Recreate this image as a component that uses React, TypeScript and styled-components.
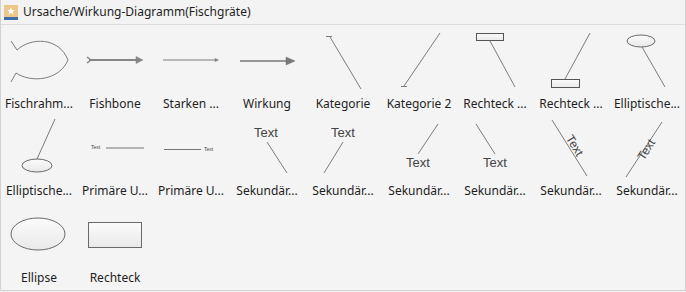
import React, { FC, ReactNode } from "react";
import styled, { createGlobalStyle } from "styled-components";

const GlobalStyle = createGlobalStyle`
    html, body {
        margin: 0;
        padding: 0;
        background: #f4f4f4;
    }
`;

const Panel = styled.div`
    box-sizing: border-box;
    width: 686px;
    height: 291px;
    background: #f4f4f4;
    border: 1px solid #d2d2d2;
    border-top: none;
    font-family: "Noto Sans", "Liberation Sans", sans-serif;
    color: #222;
    overflow: hidden;
`;

const Header = styled.div`
    height: 24px;
    display: flex;
    align-items: center;
    gap: 5px;
    padding-left: 3px;
    border-bottom: 1px solid #dcdcdc;
    background: #f3f3f3;
`;

const Title = styled.span`
    font-size: 12px;
    line-height: 24px;
    color: #1e1e1e;
    white-space: nowrap;
`;

const Grid = styled.div`
    display: grid;
    grid-template-columns: repeat(9, 76px);
    grid-auto-rows: 87px;
`;

const Cell = styled.div`
    display: flex;
    flex-direction: column;
    align-items: center;
`;

const Canvas = styled.svg`
    display: block;
    width: 76px;
    height: 70px;
    overflow: visible;
`;

const Label = styled.span`
    height: 17px;
    line-height: 18px;
    font-size: 12px;
    color: #1e1e1e;
    white-space: nowrap;
`;

const LINE = "#7c7c7c";
const EDGE = "#6a6a6a";

const Defs = () => (
    <defs>
        <linearGradient id="box" x1="0" y1="0" x2="0" y2="1">
            <stop offset="0" stopColor="#fbfbfb" />
            <stop offset="1" stopColor="#e9e9e9" />
        </linearGradient>
    </defs>
);

const Txt: FC<{ x: number; y: number; size?: number; rotate?: number; anchor?: "start" | "middle" | "end" }> = ({ x, y, size = 13, rotate = 0, anchor = "middle" }) => (
    <text
        x={x}
        y={y}
        fontSize={size}
        fill="#444"
        fontFamily="Liberation Sans, sans-serif"
        textAnchor={anchor}
        dominantBaseline="middle"
        transform={rotate ? `rotate(${rotate} ${x} ${y})` : undefined}
    >
        Text
    </text>
);

type Shape = { label: string; icon: ReactNode };

const shapes: Shape[] = [
    {
        label: "Fischrahm...",
        icon: (
            <path d="M10 16 L16 25 C30 12 58 12 67 35 C58 56 30 58 15 48 L10 57" fill="none" stroke={LINE} strokeWidth={1} />
        ),
    },
    {
        label: "Fishbone",
        icon: (
            <g stroke="#858585" fill="#858585">
                <line x1={12} y1={35} x2={61} y2={35} strokeWidth={2} />
                <path d="M10 32 L14 35 L10 38" fill="none" strokeWidth={1.5} />
                <path d="M59 31.5 L66 35 L59 38.5 Z" strokeWidth={0.5} />
            </g>
        ),
    },
    {
        label: "Starken ...",
        icon: (
            <g stroke={LINE} fill={LINE}>
                <line x1={10} y1={35} x2={63} y2={35} strokeWidth={1} />
                <path d="M62 33.5 L65.5 35 L62 36.5 Z" strokeWidth={0.5} />
            </g>
        ),
    },
    {
        label: "Wirkung",
        icon: (
            <g stroke="#777" fill="#777">
                <line x1={11} y1={36} x2={59} y2={36} strokeWidth={1.3} />
                <path d="M57 32 L66 36 L57 40 Z" strokeWidth={0.5} />
            </g>
        ),
    },
    {
        label: "Kategorie",
        icon: (
            <g stroke={LINE} fill="none">
                <line x1={25} y1={12} x2={56} y2={64} />
                <line x1={21} y1={11.5} x2={27} y2={11.5} strokeWidth={1} />
            </g>
        ),
    },
    {
        label: "Kategorie 2",
        icon: (
            <g stroke={LINE} fill="none">
                <line x1={59} y1={8} x2={23} y2={61} />
                <line x1={20} y1={61.5} x2={26} y2={61.5} strokeWidth={1} />
            </g>
        ),
    },
    {
        label: "Rechteck ...",
        icon: (
            <g>
                <line x1={33} y1={16} x2={58} y2={62} stroke={LINE} />
                <rect x={19.5} y={8.5} width={27} height={7} fill="url(#box)" stroke="#555" />
            </g>
        ),
    },
    {
        label: "Rechteck ...",
        icon: (
            <g>
                <line x1={57} y1={8} x2={32} y2={54} stroke={LINE} />
                <rect x={18.5} y={54.5} width={28} height={8} fill="url(#box)" stroke="#555" />
            </g>
        ),
    },
    {
        label: "Elliptische...",
        icon: (
            <g>
                <line x1={33} y1={22} x2={56} y2={62} stroke={LINE} />
                <ellipse cx={32} cy={16} rx={14} ry={6} fill="url(#box)" stroke={EDGE} />
            </g>
        ),
    },
    {
        label: "Elliptische...",
        icon: (
            <g>
                <line x1={54} y1={7} x2={36} y2={47} stroke={LINE} />
                <ellipse cx={36} cy={53.5} rx={15} ry={6.5} fill="url(#box)" stroke={EDGE} />
            </g>
        ),
    },
    {
        label: "Primäre U...",
        icon: (
            <g>
                <Txt x={14} y={36} size={5} anchor="start" />
                <line x1={29} y1={36} x2={67} y2={36} stroke="#555" strokeWidth={0.8} />
            </g>
        ),
    },
    {
        label: "Primäre U...",
        icon: (
            <g>
                <line x1={11} y1={37.5} x2={48} y2={37.5} stroke="#555" strokeWidth={0.8} />
                <Txt x={51} y={38} size={5} anchor="start" />
            </g>
        ),
    },
    {
        label: "Sekundär...",
        icon: (
            <g>
                <Txt x={37} y={22} />
                <line x1={38} y1={30} x2={58} y2={61} stroke={LINE} />
            </g>
        ),
    },
    {
        label: "Sekundär...",
        icon: (
            <g>
                <Txt x={38} y={22} />
                <line x1={38} y1={30} x2={19} y2={61} stroke={LINE} />
            </g>
        ),
    },
    {
        label: "Sekundär...",
        icon: (
            <g>
                <line x1={57} y1={12} x2={37} y2={42} stroke={LINE} />
                <Txt x={37} y={52} />
            </g>
        ),
    },
    {
        label: "Sekundär...",
        icon: (
            <g>
                <line x1={19} y1={12} x2={38} y2={42} stroke={LINE} />
                <Txt x={38} y={52} />
            </g>
        ),
    },
    {
        label: "Sekundär...",
        icon: (
            <g>
                <line x1={19} y1={8} x2={54} y2={64} stroke={LINE} />
                <Txt x={41} y={34} size={12} rotate={58} />
            </g>
        ),
    },
    {
        label: "Sekundär...",
        icon: (
            <g>
                <line x1={53} y1={10} x2={17} y2={65} stroke={LINE} />
                <Txt x={38} y={38} size={12} rotate={-57} />
            </g>
        ),
    },
    {
        label: "Ellipse",
        icon: <ellipse cx={37} cy={35} rx={27} ry={16} fill="url(#box)" stroke={EDGE} />,
    },
    {
        label: "Rechteck",
        icon: <rect x={11.5} y={23.5} width={53} height={25} fill="url(#box)" stroke={EDGE} />,
    },
];

const LibraryIcon = () => (
    <svg width="14" height="15" viewBox="0 0 14 15">
        <rect x="0" y="0" width="14" height="12" fill="#ecc789" />
        <rect x="0" y="12" width="14" height="3" fill="#3f6ea8" />
        <path d="M7 2.3 L8.1 5 L10.9 5.1 L8.7 6.8 L9.5 9.5 L7 7.9 L4.5 9.5 L5.3 6.8 L3.1 5.1 L5.9 5 Z" fill="#fff" />
    </svg>
);

export default function App() {
    return (
        <>
            <GlobalStyle />
            <Panel>
                <Header>
                    <LibraryIcon />
                    <Title>Ursache/Wirkung-Diagramm(Fischgräte)</Title>
                </Header>
                <Grid>
                    {shapes.map((s, i) => (
                        <Cell key={i}>
                            <Canvas viewBox="0 0 76 70">
                                <Defs />
                                {s.icon}
                            </Canvas>
                            <Label>{s.label}</Label>
                        </Cell>
                    ))}
                </Grid>
            </Panel>
        </>
    );
}
